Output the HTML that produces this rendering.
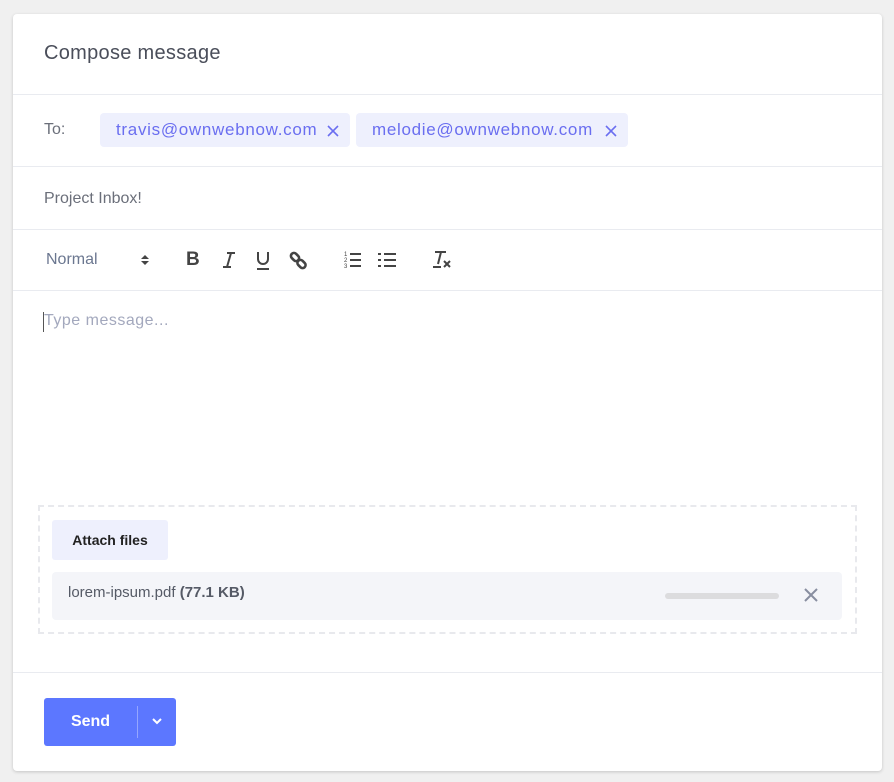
<!DOCTYPE html>
<html><head><meta charset="utf-8"><style>
*{box-sizing:border-box;margin:0;padding:0}
body{width:894px;height:782px;background:#f0f0f0;font-family:"Liberation Sans",sans-serif;position:relative;overflow:hidden}
.card{position:absolute;left:13px;top:14px;width:869px;height:757px;background:#fff;border-radius:4px;box-shadow:0 1px 3px rgba(0,0,0,.18)}
.a{position:absolute;white-space:nowrap}
.hr{position:absolute;left:0;width:869px;height:1px;background:#e9ebf0}
.chip{position:absolute;top:99px;height:34px;background:#eef0fd;border-radius:4px;color:#6a6ef0;font-size:17px;line-height:34px;padding-left:16px;letter-spacing:.7px}
svg{position:absolute}
</style></head><body>
<div class="card">
<div class="a" style="left:31px;top:28px;font-size:20px;color:#4a4e5a;letter-spacing:.3px">Compose message</div>
<div class="hr" style="top:80px"></div>
<div class="a" style="left:31px;top:107px;font-size:16px;color:#6b6f7a">To:</div>
<div class="chip" style="left:87px;width:250px">travis@ownwebnow.com</div>
<svg style="left:314px;top:111px" width="12" height="12"><path d="M1 1l10 10M11 1L1 11" stroke="#6a6ef0" stroke-width="1.6"/></svg>
<div class="chip" style="left:343px;width:272px">melodie@ownwebnow.com</div>
<svg style="left:592px;top:111px" width="12" height="12"><path d="M1 1l10 10M11 1L1 11" stroke="#6a6ef0" stroke-width="1.6"/></svg>
<div class="hr" style="top:152px"></div>
<div class="a" style="left:31px;top:176px;font-size:16px;color:#6b6f7a">Project Inbox!</div>
<div class="hr" style="top:215px"></div>
<div class="a" style="left:33px;top:237px;font-size:16px;color:#6b7790">Normal</div>
<svg style="left:126px;top:238px" width="12" height="16" viewBox="0 0 12 16"><path d="M2 7l4-4 4 4zM2 9l4 4 4-4z" fill="#444"/></svg>
<div class="a" style="left:173px;top:235px;font-size:19px;font-weight:bold;color:#444">B</div>
<svg style="left:208px;top:237px" width="16" height="20"><path d="M6 2h8M2 16h8M10 2L6 16" stroke="#444" stroke-width="2" fill="none"/></svg>
<svg style="left:242px;top:237px" width="16" height="20"><path d="M3 1v7a5 5 0 0010 0V1M2 18h12" stroke="#444" stroke-width="2" fill="none"/></svg>
<svg style="left:276px;top:237px" width="20" height="20"><g fill="none" stroke="#444" stroke-width="2.6"><rect x="1.5" y="3" width="9" height="6" rx="3" transform="rotate(45 6 6)"/><rect x="8" y="10" width="9" height="6" rx="3" transform="rotate(45 12.5 13)"/></g></svg>
<svg style="left:330px;top:237px" width="20" height="20"><g stroke="#444" stroke-width="2"><path d="M7 3h11M7 9h11M7 15h11"/></g><g font-size="6" fill="#444" font-family="Liberation Sans"><text x="1" y="5">1</text><text x="1" y="11">2</text><text x="1" y="17">3</text></g></svg>
<svg style="left:364px;top:237px" width="20" height="20"><g stroke="#444" stroke-width="2"><path d="M7 3h12M7 9h12M7 15h12M1 3h3M1 9h3M1 15h3"/></g></svg>
<svg style="left:418px;top:236px" width="22" height="20"><path d="M4 2h11M10 2L7 14M2 17h8M13 11l6 6M19 11l-6 6" stroke="#444" stroke-width="2" fill="none"/></svg>
<div class="hr" style="top:276px"></div>
<div class="a" style="left:30px;top:298px;width:1px;height:20px;background:#555"></div>
<div class="a" style="left:31px;top:298px;font-size:16px;color:#a3a8bd;letter-spacing:.5px">Type message...</div>
<div class="a" style="left:25px;top:491px;width:819px;height:129px;border:2px dashed #e8e9ed"></div>
<div class="a" style="left:39px;top:506px;width:116px;height:40px;background:#eef0fd;border-radius:3px;font-size:14px;font-weight:bold;color:#222;line-height:40px;text-align:center">Attach files</div>
<div class="a" style="left:39px;top:558px;width:790px;height:48px;background:#f4f5f9;border-radius:4px"></div>
<div class="a" style="left:55px;top:570px;font-size:15px;color:#555a66">lorem-ipsum.pdf <b>(77.1 KB)</b></div>
<div class="a" style="left:652px;top:579px;width:114px;height:6px;background:#dcdcde;border-radius:3px"></div>
<svg style="left:790px;top:573px" width="16" height="16"><path d="M2 2l12 12M14 2L2 14" stroke="#888ea0" stroke-width="2"/></svg>
<div class="hr" style="top:658px"></div>
<div class="a" style="left:31px;top:684px;width:132px;height:48px;background:#5c77ff;border-radius:3px"></div>
<div class="a" style="left:31px;top:684px;width:93px;height:48px;line-height:48px;text-align:center;color:#fff;font-size:16px;font-weight:bold">Send</div>
<div class="a" style="left:124px;top:692px;width:1px;height:32px;background:rgba(255,255,255,.35)"></div>
<svg style="left:138px;top:702px" width="12" height="10"><path d="M2 3l4 4 4-4" stroke="#fff" stroke-width="2" fill="none"/></svg>
</div>
</body></html>
